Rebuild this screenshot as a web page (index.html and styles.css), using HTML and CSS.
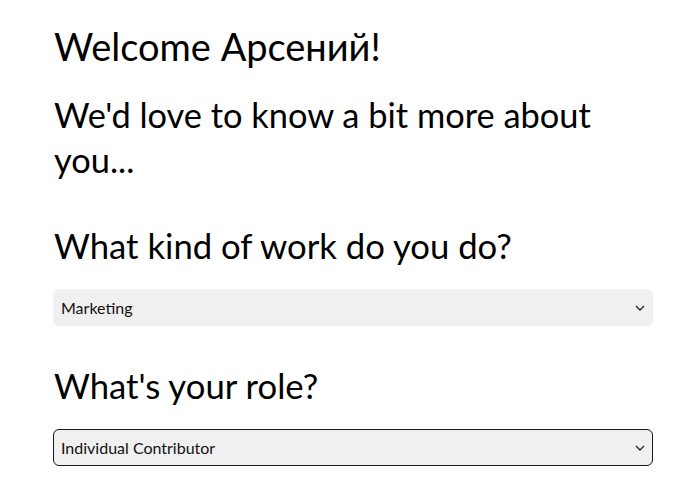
FILE: index.html
```html
<!DOCTYPE html>
<html lang="en">
<head>
<meta charset="utf-8">
<link rel="stylesheet" href="styles.css">
</head>
<body>
<main class="page">
  <h1 class="title">Welcome Арсений!</h1>
  <h2 class="subtitle">We'd love to know a bit more about you...</h2>
  <section class="field">
    <h2 class="question">What kind of work do you do?</h2>
    <div class="select">
      <span class="select-value">Marketing</span>
      <svg class="chevron" width="10" height="6" viewBox="0 0 10 6"><path d="M1 1 L5 5 L9 1" fill="none" stroke="#222" stroke-width="1.3"/></svg>
    </div>
  </section>
  <section class="field">
    <h2 class="question">What's your role?</h2>
    <div class="select select-focused">
      <span class="select-value">Individual Contributor</span>
      <svg class="chevron" width="10" height="6" viewBox="0 0 10 6"><path d="M1 1 L5 5 L9 1" fill="none" stroke="#222" stroke-width="1.3"/></svg>
    </div>
  </section>
</main>
</body>
</html>
```

FILE: styles.css
```css
* { box-sizing: border-box; }
html, body { margin: 0; padding: 0; background: #fff; }
body {
  font-family: "Lato", "DejaVu Sans", sans-serif;
  color: #000;
}
.page {
  width: 600px;
  margin-left: 53px;
  padding-top: 22px;
}
.title {
  font-weight: 400;
  font-size: 38px;
  line-height: 48px;
  margin: 0 0 22px 1px;
}
.subtitle {
  font-weight: 400;
  font-size: 34.4px;
  line-height: 45px;
  margin: 0 0 40px 1px;
}
.question {
  font-weight: 400;
  font-size: 34.7px;
  line-height: 47px;
  margin: 0 0 20px 1px;
}
.field { margin-bottom: 36px; }
.select {
  display: flex;
  align-items: center;
  justify-content: space-between;
  height: 37px;
  padding: 0 7px 0 7px;
  background: #f0f0f0;
  border: 1px solid #f0f0f0;
  border-radius: 6px;
  font-size: 16px;
  color: #111;
}
.select-focused { border-color: #1a1a1a; }
.chevron { display: block; }
```
